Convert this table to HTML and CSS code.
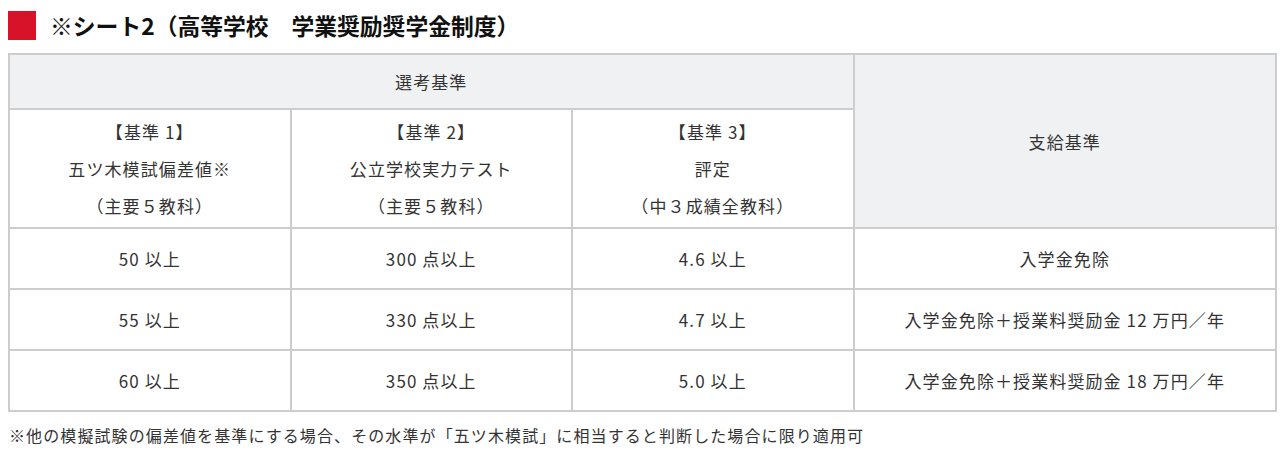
FILE: index.html
```html
<!DOCTYPE html>
<html lang="ja">
<head>
<meta charset="utf-8">
<link rel="stylesheet" href="styles.css">
</head>
<body>
<h2 class="title"><span class="title-mark"></span>※シート2（高等学校　学業奨励奨学金制度）</h2>
<table class="grid">
  <colgroup>
    <col class="c-crit"><col class="c-crit"><col class="c-crit"><col class="c-pay">
  </colgroup>
  <thead>
    <tr class="r-h1">
      <th colspan="3">選考基準</th>
      <th rowspan="2">支給基準</th>
    </tr>
    <tr class="r-h2">
      <td>【基準 1】<br>五ツ木模試偏差値※<br>（主要５教科）</td>
      <td>【基準 2】<br>公立学校実力テスト<br>（主要５教科）</td>
      <td>【基準 3】<br>評定<br>（中３成績全教科）</td>
    </tr>
  </thead>
  <tbody>
    <tr class="r-d">
      <td>50 以上</td><td>300 点以上</td><td>4.6 以上</td><td>入学金免除</td>
    </tr>
    <tr class="r-d">
      <td>55 以上</td><td>330 点以上</td><td>4.7 以上</td><td>入学金免除＋授業料奨励金 12 万円／年</td>
    </tr>
    <tr class="r-d">
      <td>60 以上</td><td>350 点以上</td><td>5.0 以上</td><td>入学金免除＋授業料奨励金 18 万円／年</td>
    </tr>
  </tbody>
</table>
<p class="note">※他の模擬試験の偏差値を基準にする場合、その水準が「五ツ木模試」に相当すると判断した場合に限り適用可</p>
</body>
</html>
```

FILE: styles.css
```css
* { box-sizing: border-box; }
body {
  margin: 0;
  padding: 0 3px 0 8px;
  font-family: "Noto Sans CJK JP", "Noto Sans", sans-serif;
  color: #333;
  background: #fff;
}
.title {
  display: flex;
  align-items: center;
  gap: 14px;
  margin: 0 0 13px;
  padding-top: 11px;
  height: 40px;
  font-size: 22.8px;
  font-weight: 700;
  line-height: 29px;
  color: #111;
}
.title-mark {
  width: 28px;
  height: 29px;
  background: #d7132a;
  flex: none;
}
.grid {
  width: 100%;
  border-collapse: collapse;
  table-layout: fixed;
  font-size: 17px;
  letter-spacing: 1.1px;
}
.c-crit { width: 22.22%; }
.c-pay { width: 33.34%; }
.grid th, .grid td {
  border: 2px solid #cdcdcd;
  text-align: center;
  vertical-align: middle;
  font-weight: 400;
  padding: 0;
  line-height: 37px;
}
.grid th { background: #f0f1f3; }
.r-h1 th { height: 55px; }
.r-h2 td { height: 117px; padding: 3px 0; }
.r-d td { height: 61px; }
.note {
  margin: 11px 0 0 1px;
  font-size: 16px;
  letter-spacing: 1.1px;
}
```
